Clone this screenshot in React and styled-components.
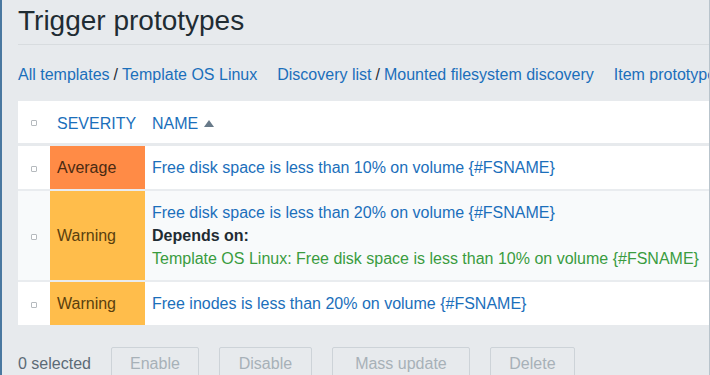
import React from "react";
import styled, { createGlobalStyle } from "styled-components";

const Global = createGlobalStyle`
  html, body { margin: 0; padding: 0; }
  body {
    background: #e7eaed;
    font-family: "Liberation Sans", Arial, sans-serif;
    color: #1f2c33;
  }
`;

const Page = styled.div`
  box-sizing: border-box;
  width: 710px;
  height: 375px;
  overflow: hidden;
  background: #e7eaed;
  border-left: 2px solid #4a78a0;
  border-right: 1px solid #b9c4cc;
  padding-left: 16px;
  font-size: 16px;
`;

const Header = styled.header`
  padding: 4px 0 6px;
  border-bottom: 1px solid #d8dcdf;
`;

const Title = styled.h1`
  margin: 0;
  font-size: 28px;
  line-height: 34px;
  font-weight: normal;
  color: #1f2c33;
  white-space: nowrap;
`;

const Nav = styled.nav`
  display: flex;
  gap: 20px;
  margin-top: 19px;
  line-height: 22px;
  white-space: nowrap;
`;

const Crumbs = styled.span`
  display: inline-flex;
  gap: 4px;
`;

const Link = styled.a`
  color: #1b6fbb;
  text-decoration: none;
  cursor: pointer;
`;

const Sep = styled.span`
  color: #1f2c33;
`;

const Table = styled.table`
  margin-top: 15px;
  width: 900px;
  border-spacing: 0;
  background: #fff;
  line-height: 23px;
`;

const Th = styled.th`
  text-align: left;
  font-weight: normal;
  color: #1b6fbb;
  text-transform: uppercase;
  padding: 11px 7px 8px;
  border-bottom: 3px solid #e7eaed;
  white-space: nowrap;
  vertical-align: middle;
  width: ${(p) => p.$w || "auto"};
`;

const Tr = styled.tr`
  background: ${(p) => (p.$hl ? "#f8fafb" : "#fff")};
  &:not(:last-child) td {
    border-bottom: 2px solid #e9ecef;
  }
`;

const Td = styled.td`
  padding: 10px 7px;
  vertical-align: middle;
  white-space: nowrap;
`;

const CheckCell = styled(Td)`
  width: 32px;
  padding: 0;
  text-align: center;
`;

const CheckTh = styled(Th)`
  width: 32px;
  padding: 0;
  text-align: center;
`;

const Box = styled.span`
  display: inline-block;
  box-sizing: border-box;
  width: 6px;
  height: 6px;
  border: 1px solid #b5babe;
  border-radius: 1px;
  background: #fff;
  vertical-align: middle;
`;

const SevCell = styled(Td)`
  width: 81px;
  background: ${(p) => p.$bg};
  color: ${(p) => p.$fg};
`;

const SortArrow = styled.span`
  display: inline-block;
  width: 0;
  height: 0;
  margin-left: 6px;
  border-left: 5px solid transparent;
  border-right: 5px solid transparent;
  border-bottom: 7px solid #687a89;
  vertical-align: 2px;
`;

const Bold = styled.div`
  font-weight: bold;
  color: #1f2c33;
`;

const Green = styled.div`
  color: #3a9c3f;
`;

const Footer = styled.div`
  display: flex;
  align-items: center;
  gap: 20px;
  margin-top: 22px;
  white-space: nowrap;
`;

const Selected = styled.span`
  color: #5c6b76;
`;

const Button = styled.button`
  box-sizing: border-box;
  height: 34px;
  padding: 0 18px;
  min-width: ${(p) => p.$min || "0"};
  border: 1px solid #cdd3d8;
  border-radius: 2px;
  background: transparent;
  color: #a7b1b8;
  font-family: inherit;
  font-size: 16px;
  flex-shrink: 0;
`;

const SEV = {
  Average: { bg: "#ff8b46", fg: "#4a2a12" },
  Warning: { bg: "#ffbd4b", fg: "#5a3f0e" },
};

const rows = [
  { sev: "Average", name: "Free disk space is less than 10% on volume {#FSNAME}" },
  {
    sev: "Warning",
    name: "Free disk space is less than 20% on volume {#FSNAME}",
    dep: "Template OS Linux: Free disk space is less than 10% on volume {#FSNAME}",
    hl: true,
  },
  { sev: "Warning", name: "Free inodes is less than 20% on volume {#FSNAME}" },
];

export default function App() {
  return (
    <>
      <Global />
      <Page>
        <Header>
          <Title>Trigger prototypes</Title>
        </Header>
        <Nav>
          <Crumbs>
            <Link>All templates</Link>
            <Sep>/</Sep>
            <Link>Template OS Linux</Link>
          </Crumbs>
          <Crumbs>
            <Link>Discovery list</Link>
            <Sep>/</Sep>
            <Link>Mounted filesystem discovery</Link>
          </Crumbs>
          <Crumbs>
            <Link>Item prototypes</Link>
          </Crumbs>
        </Nav>
        <Table>
          <thead>
            <tr>
              <CheckTh>
                <Box />
              </CheckTh>
              <Th $w="81px">Severity</Th>
              <Th>
                Name
                <SortArrow />
              </Th>
            </tr>
          </thead>
          <tbody>
            {rows.map((r, i) => (
              <Tr key={i} $hl={r.hl}>
                <CheckCell>
                  <Box />
                </CheckCell>
                <SevCell $bg={SEV[r.sev].bg} $fg={SEV[r.sev].fg}>
                  {r.sev}
                </SevCell>
                <Td>
                  <Link>{r.name}</Link>
                  {r.dep && (
                    <>
                      <Bold>Depends on:</Bold>
                      <Green>{r.dep}</Green>
                    </>
                  )}
                </Td>
              </Tr>
            ))}
          </tbody>
        </Table>
        <Footer>
          <Selected>0 selected</Selected>
          <Button $min="88px">Enable</Button>
          <Button $min="93px">Disable</Button>
          <Button $min="138px">Mass update</Button>
          <Button $min="85px">Delete</Button>
        </Footer>
      </Page>
    </>
  );
}
